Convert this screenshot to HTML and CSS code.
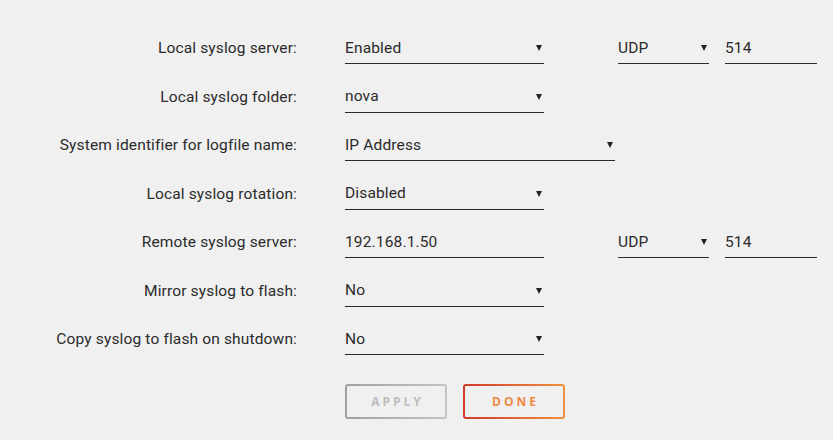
FILE: index.html
```
<!DOCTYPE html>
<html lang="en">
<head>
    <meta charset="UTF-8">
    <meta name="viewport" content="width=device-width, initial-scale=1.0">
    <title>Syslog settings</title>
    <link rel="stylesheet" href="styles.css">
</head>
<body>
    <div class="settings">
        <div class="row">
            <div class="label">Local syslog server:</div>
            <div class="fields">
                <div class="field select">Enabled<span class="arrow"></span></div>
                <div class="field select proto">UDP<span class="arrow"></span></div>
                <div class="field port">514</div>
            </div>
        </div>
        <div class="row">
            <div class="label">Local syslog folder:</div>
            <div class="fields">
                <div class="field select">nova<span class="arrow"></span></div>
            </div>
        </div>
        <div class="row">
            <div class="label">System identifier for logfile name:</div>
            <div class="fields">
                <div class="field select wide">IP Address<span class="arrow"></span></div>
            </div>
        </div>
        <div class="row">
            <div class="label">Local syslog rotation:</div>
            <div class="fields">
                <div class="field select">Disabled<span class="arrow"></span></div>
            </div>
        </div>
        <div class="row">
            <div class="label">Remote syslog server:</div>
            <div class="fields">
                <div class="field">192.168.1.50</div>
                <div class="field select proto">UDP<span class="arrow"></span></div>
                <div class="field port">514</div>
            </div>
        </div>
        <div class="row">
            <div class="label">Mirror syslog to flash:</div>
            <div class="fields">
                <div class="field select">No<span class="arrow"></span></div>
            </div>
        </div>
        <div class="row">
            <div class="label">Copy syslog to flash on shutdown:</div>
            <div class="fields">
                <div class="field select">No<span class="arrow"></span></div>
            </div>
        </div>

        <div class="actions">
            <button class="btn btn-apply">APPLY</button>
            <button class="btn btn-done">DONE</button>
        </div>
    </div>
</body>
</html>
```

FILE: styles.css
```
body {
    margin: 0;
    background: #f0f0f0;
    font-family: Roboto, 'Liberation Sans', sans-serif;
    font-size: 15.5px;
    letter-spacing: 0.15px;
    color: #2b2b2b;
}
.settings {
    padding-top: 30px;
    display: flex;
    flex-direction: column;
    gap: 14.5px;
}
.row {
    display: grid;
    grid-template-columns: 297px 1fr;
    column-gap: 48px;
    align-items: center;
    height: 34px;
}
.label {
    text-align: right;
    padding-top: 2px;
}
.fields {
    display: flex;
}
.field {
    position: relative;
    box-sizing: border-box;
    width: 199px;
    height: 34px;
    padding-top: 2px;
    display: flex;
    align-items: center;
    border-bottom: 1px solid #2b2b2b;
}
.field.wide {
    width: 270px;
}
.field.proto {
    width: 91px;
    margin-left: 74px;
}
.field.port {
    width: 92px;
    margin-left: 16px;
}
.arrow {
    position: absolute;
    right: 2px;
    top: 15px;
    width: 0;
    height: 0;
    border-left: 3px solid transparent;
    border-right: 3px solid transparent;
    border-top: 6px solid #222;
}
.actions {
    display: flex;
    gap: 16px;
    margin-left: 345px;
    margin-top: 14px;
}
.btn {
    width: 102px;
    height: 35px;
    border: 2px solid transparent;
    border-radius: 3px;
    font-family: 'Open Sans', 'Liberation Sans', sans-serif;
    font-weight: bold;
    font-size: 12px;
    letter-spacing: 3px;
    padding: 0 0 0 3px;
    cursor: pointer;
}
.btn-apply {
    color: #bdbdbd;
    background: linear-gradient(#f0f0f0, #f0f0f0) padding-box,
                linear-gradient(90deg, #a0a0a0, #c4c4c4) border-box;
}
.btn-done {
    color: #ec8a40;
    background: linear-gradient(#f0f0f0, #f0f0f0) padding-box,
                linear-gradient(90deg, #d23a2e, #f0903f) border-box;
}
```
